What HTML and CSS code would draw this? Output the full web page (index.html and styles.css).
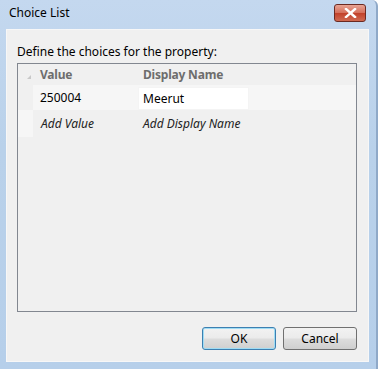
FILE: index.html
```html
<!DOCTYPE html>
<html lang="en">
  <head>
    <meta charset="UTF-8" />
    <title>Choice List</title>
    <link rel="stylesheet" href="styles.css">
  </head>
  <body>
    <div class="window">
      <div class="titlebar">
        <span class="title">Choice List</span>
        <button class="close-btn" title="Close">
          <svg width="13" height="10" viewBox="0 0 13 10">
            <path d="M2 1 L11 9 M11 1 L2 9" stroke="#fff" stroke-width="2.4" stroke-linecap="square" />
          </svg>
        </button>
      </div>

      <div class="client">
        <p class="prompt">Define the choices for the property:</p>

        <div class="grid">
          <div class="row head-row">
            <div class="gutter"><span class="sort-mark"></span></div>
            <div class="cell col-value">Value</div>
            <div class="cell col-name">Display Name</div>
          </div>
          <div class="row data-row">
            <div class="gutter"></div>
            <div class="cell col-value">250004</div>
            <div class="cell col-name"><span class="edit-box">Meerut</span></div>
          </div>
          <div class="row new-row">
            <div class="gutter"></div>
            <div class="cell col-value">Add Value</div>
            <div class="cell col-name">Add Display Name</div>
          </div>
        </div>

        <div class="buttons">
          <button class="btn btn-default">OK</button>
          <button class="btn">Cancel</button>
        </div>
      </div>
    </div>
  </body>
</html>
```

FILE: styles.css
```css
* {
  margin: 0;
  padding: 0;
  box-sizing: border-box;
}

body {
  font-family: "Noto Sans", "Open Sans", sans-serif;
  font-size: 12px;
  background-color: #fff;
}

.window {
  width: 378px;
  height: 369px;
  display: flex;
  flex-direction: column;
  background: linear-gradient(180deg, #c4d8ef 0%, #b9d1ea 40%, #b6cfea 100%);
  border-right: 2px solid #8fa9c8;
  border-top-right-radius: 6px;
  padding: 0 7px 7px 6px;
}

.titlebar {
  height: 29px;
  display: flex;
  align-items: center;
  justify-content: space-between;
}

.title {
  color: #000;
  padding-left: 3px;
  padding-bottom: 4px;
}

.close-btn {
  width: 32px;
  height: 18px;
  margin-right: 3px;
  margin-bottom: 4px;
  border: 1px solid #6b2a22;
  border-radius: 3px;
  background: linear-gradient(180deg, #e8a494 0%, #d5705c 48%, #c2412a 52%, #cf6a52 100%);
  display: flex;
  align-items: center;
  justify-content: center;
}

.client {
  flex: 1;
  background-color: #f0f0f0;
  border: 1px solid #f7f7f7;
  padding: 0 11px 11px 10px;
  display: flex;
  flex-direction: column;
}

.prompt {
  color: #000;
  margin-top: 13px;
  height: 20px;
}

.grid {
  height: 249px;
  border: 1px solid #828790;
  background-color: #f0f0f0;
}

.row {
  display: flex;
}

.gutter {
  width: 15px;
  position: relative;
}

.cell {
  display: flex;
  align-items: center;
}

.col-value {
  width: 102px;
  padding-left: 7px;
}

.col-name {
  flex: 1;
  padding-left: 3px;
}

.head-row {
  height: 21px;
  color: #6d6d6d;
  font-weight: bold;
  letter-spacing: -0.2px;
}

.head-row .col-name {
  padding-left: 8px;
}

.sort-mark {
  position: absolute;
  left: 9px;
  top: 11px;
  width: 0;
  height: 0;
  border-left: 4px solid transparent;
  border-bottom: 4px solid #c8c8c8;
}

.data-row {
  height: 25px;
  background-color: #f6f6f6;
}

.data-row .gutter {
  background-color: #f0f0f0;
}

.edit-box {
  display: flex;
  align-items: center;
  width: 111px;
  height: 23px;
  margin-top: 1px;
  padding-left: 4px;
  background-color: #fff;
  border: 1px solid #f4f4f4;
}

.new-row {
  height: 27px;
  font-style: italic;
  color: #222;
}

.new-row .gutter {
  background-color: #f6f6f6;
}

.new-row .col-value {
  padding-left: 8px;
}

.new-row .col-name {
  padding-left: 8px;
}

.buttons {
  display: flex;
  justify-content: flex-end;
  gap: 7px;
  margin-top: auto;
}

.btn {
  width: 74px;
  height: 23px;
  font-family: inherit;
  font-size: 12px;
  color: #000;
  border: 1px solid #707070;
  border-radius: 3px;
  background: linear-gradient(180deg, #f2f2f2 0%, #ebebeb 48%, #dddddd 52%, #cfcfcf 100%);
}

.btn-default {
  border-color: #3c7fb1;
  box-shadow: inset 0 0 0 1px #9fdcf4;
}
```
